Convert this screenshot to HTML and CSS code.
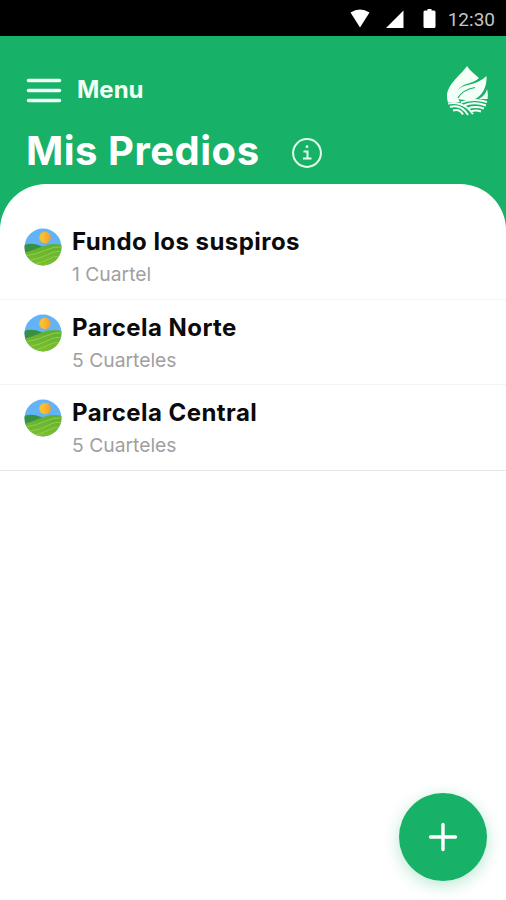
FILE: index.html
```
<!DOCTYPE html>
<html lang="es">
<head>
    <meta charset="UTF-8">
    <meta name="viewport" content="width=device-width, initial-scale=1.0">
    <title>Mis Predios</title>
    <link rel="stylesheet" href="styles.css">
</head>
<body>
    <!-- dibujo del campo, compartido por todas las filas -->
    <svg class="defs" width="0" height="0">
        <defs>
            <clipPath id="round"><circle cx="19" cy="19" r="18.500"/></clipPath>
            <linearGradient id="sun"><stop offset="0.3" stop-color="#fbc02f"/><stop offset="1" stop-color="#f79c2d"/></linearGradient>
            <linearGradient id="grass" x1="0" y1="0" x2="0" y2="1"><stop offset="0" stop-color="#5fae35"/><stop offset="1" stop-color="#7cc02c"/></linearGradient>
            <symbol id="field" viewBox="0 0 38 38">
                <g clip-path="url(#round)">
                    <rect width="38" height="38" fill="#62b4f6"/>
                    <circle cx="21" cy="9.500" r="5.800" fill="url(#sun)"/>
                    <path d="M0 17 Q8 14 17 18 L26 24 L0 30Z" fill="#389044"/>
                    <path d="M0 25 Q10 22 18 18.500 Q28 14.500 38 17 V38 H0Z" fill="url(#grass)"/>
                    <path d="M1 28 Q14 26 22 22 T38 19 M4 32.500 Q16 31 24 26.500 T38 24 M10 36.500 Q19 34 26 30.500 T37 29" fill="none" stroke="#98d04c" stroke-width="0.9"/>
                </g>
            </symbol>
        </defs>
    </svg>

    <div class="status">
        <svg class="status-icons" width="92" height="36" viewBox="0 0 92 36">
            <path d="M0.500 12.500 Q10 6.500 19.500 12.500 L10 27.500Z"/>
            <path d="M36 28 H53.500 V10.500Z"/>
            <path d="M75 10.500 H77.500 V9 H81.500 V10.500 H84 Q85.500 10.500 85.500 12 V26.500 Q85.500 28 84 28 H75 Q73.500 28 73.500 26.500 V12 Q73.500 10.500 75 10.500Z"/>
        </svg>
        <span class="time">12:30</span>
    </div>

    <header class="header">
        <div class="topbar">
            <button class="menu">
                <svg width="36" height="28" viewBox="0 0 36 28">
                    <path d="M2.500 4.500 H33.500 M2.500 14.500 H33.500 M2.500 24.500 H33.500" stroke="#f2fff5" stroke-width="3.600" stroke-linecap="round"/>
                </svg>
                <span class="menu-text">Menu</span>
            </button>
            <svg class="logo" width="44" height="52" viewBox="0 0 44 52">
                <path d="M21 1 C16 9 1 19 1 31 C1 34 1.500 36 2 37 H14 C10 30 10 22 21 19 C26 17.500 30 16 33 13 C29 9 24 6 21 1Z" fill="#f4fff8"/>
                <path d="M12 34 C9 26 13 21.500 22 20 C30 18.500 36 15 40.500 11 C41 20 38 28 31 33 C25 36.500 18 35 12 34Z" fill="#f4fff8"/>
                <path d="M41 24 C42 28 42 31 41.500 34 H33 C38 31 40 28 41 24Z" fill="#f4fff8"/>
                <path d="M12 33 C15 27.500 21 24 29 22.500" fill="none" stroke="#18b168" stroke-width="1.200"/>
                <path d="M15 37.500 C23 34.500 33 34.500 41 37 M2 38.500 C9 37 15 38.500 20 42 C24 44.500 25 47 27 49 M18 40.500 C25 37.500 33 38 40 40.500 M4 42 C11 40 16 43 19 46 L22 50 M22 43.500 C28 41 33 42 38 43.500 M7 45.500 C12 44 15 46 17 49.500 M25 46.500 C29 45 32 45.500 35 46.500" fill="none" stroke="#f4fff8" stroke-width="2"/>
            </svg>
        </div>
        <div class="title-row">
            <h1 class="title">Mis Predios</h1>
            <svg class="info" width="32" height="32" viewBox="0 0 32 32" fill="none" stroke="#e2ffeb" stroke-width="2">
                <circle cx="16" cy="16" r="13.900"/>
                <path d="M12.500 14.500 H16.500 V21 M12 21.500 H20.500"/>
                <circle cx="16" cy="9.700" r="1.400" fill="#e2ffeb" stroke="none"/>
            </svg>
        </div>
    </header>

    <main class="panel">
        <div class="item">
            <svg class="pic" width="38" height="38"><use href="#field"/></svg>
            <div class="info-text">
                <div class="name">Fundo los suspiros</div>
                <div class="count">1 Cuartel</div>
            </div>
        </div>
        <div class="item">
            <svg class="pic" width="38" height="38"><use href="#field"/></svg>
            <div class="info-text">
                <div class="name">Parcela Norte</div>
                <div class="count">5 Cuarteles</div>
            </div>
        </div>
        <div class="item last">
            <svg class="pic" width="38" height="38"><use href="#field"/></svg>
            <div class="info-text">
                <div class="name">Parcela Central</div>
                <div class="count">5 Cuarteles</div>
            </div>
        </div>
    </main>

    <button class="add">
        <svg width="30" height="30" viewBox="0 0 30 30">
            <path d="M15 2.500 V27.500 M2.500 15 H27.500" stroke="#fff" stroke-width="3.400" stroke-linecap="round"/>
        </svg>
    </button>
</body>
</html>
```
FILE: styles.css
```
*{
    box-sizing: border-box;
}
body{
    margin: 0;
    height: 900px;
    overflow: hidden;
    display: flex;
    flex-direction: column;
    background-color: #18b168;
    font-family: Inter, "Liberation Sans", sans-serif;
}
button{
    border: 0;
    padding: 0;
    font-family: inherit;
    color: white;
}
.defs{
    position: absolute;
}
.status{
    display: flex;
    justify-content: flex-end;
    height: 36px;
    padding-right: 11px;
    background-color: #000;
    color: #c4c4c4;
}
.status-icons{
    fill: white;
    margin-right: 6px;
}
.time{
    font-family: Roboto, sans-serif;
    font-size: 19px;
    line-height: 40px;
}
.header{
    height: 148px;
    padding: 29px 16px 0 26px;
}
.topbar{
    display: flex;
    justify-content: space-between;
    height: 52px;
}
.menu{
    display: flex;
    align-items: center;
    gap: 15px;
    height: 50px;
    background: none;
}
.menu-text{
    font-size: 24px;
    font-weight: 700;
    line-height: 48px;
    color: #f2fff5;
}
.title-row{
    display: flex;
    align-items: center;
    gap: 31px;
    height: 68px;
}
.title{
    margin: 0;
    font-size: 40px;
    font-weight: 700;
    letter-spacing: 0.5px;
    line-height: 68px;
    color: white;
}
.info{
    margin-top: 4px;
}
.panel{
    flex: 1;
    padding-top: 30px;
    background-color: white;
    border-radius: 46px 46px 0 0;
}
.item{
    display: flex;
    gap: 10px;
    height: 85.6px;
    padding: 14px 0 0 24px;
    border-bottom: 1px solid #f4f4f4;
}
.last{
    border-color: #e8e8e8;
}
.name{
    margin-top: -2px;
    font-size: 24px;
    font-weight: 650;
    letter-spacing: 0.45px;
    line-height: 32px;
    color: #0b0b0b;
}
.count{
    font-size: 19.3px;
    line-height: 32px;
    color: #a0a0a0;
}
.add{
    position: absolute;
    right: 19px;
    bottom: 19px;
    display: flex;
    align-items: center;
    justify-content: center;
    width: 88px;
    height: 88px;
    border-radius: 50%;
    background-color: #18b168;
    box-shadow: 0 4px 16px rgba(24, 177, 104, 0.3);
}
```
